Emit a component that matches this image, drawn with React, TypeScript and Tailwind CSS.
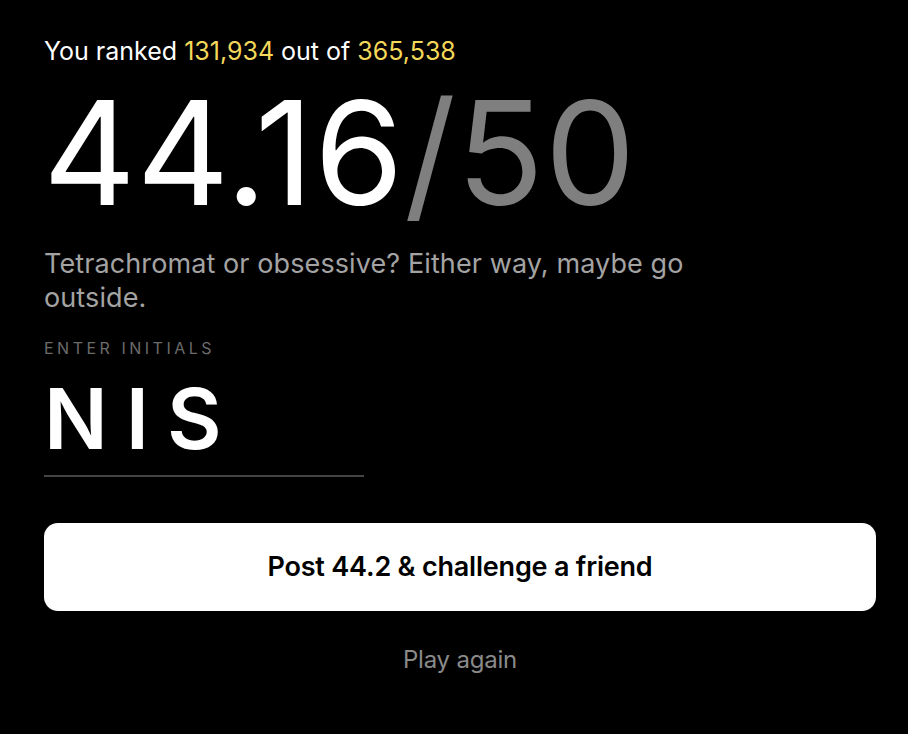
import React, { useState } from 'react'

const FONT = { fontFamily: 'Inter, "Noto Sans", sans-serif' }

export default function App() {
  const [initials, setInitials] = useState('NIS')
  const score = 44.16
  const max = 50

  return (
    <div className="min-h-screen w-full bg-black text-white" style={FONT}>
      <div className="ml-[44px] flex w-[832px] flex-col pt-[35px]">
        {/* rank line */}
        <p className="text-[25px] leading-[32px]">
          You ranked <span className="text-[#f4d85a]">131,934</span> out of{' '}
          <span className="text-[#f4d85a]">365,538</span>
        </p>

        {/* score */}
        <div className="-ml-[1px] mt-[16px] flex items-baseline text-[144px] leading-[140px] tracking-[0.6px]">
          <span className="text-white">{score}</span>
          <span className="text-[#7f7f7f]">/{max}</span>
        </div>

        <p className="mt-[24px] w-[700px] text-[27px] leading-[34px] tracking-[0.1px] text-[#a3a3a3]">
          Tetrachromat or obsessive? Either way, maybe go outside.
        </p>

        {/* initials */}
        <label className="mt-[23px] text-[16px] uppercase leading-[20px] tracking-[3.5px] text-[#6b6b6b]">
          Enter initials
        </label>
        <input
          value={initials}
          maxLength={3}
          onChange={(e) => setInitials(e.target.value.toUpperCase())}
          className="mt-[14px] w-[320px] border-b-2 border-[#444] bg-transparent pb-[9px] text-[84px] font-semibold leading-[94px] tracking-[18px] text-white outline-none"
        />

        <button className="mt-[46px] h-[88px] w-full rounded-[14px] bg-white text-[27px] font-semibold tracking-[-0.2px] text-black">
          Post {score.toFixed(1)} &amp; challenge a friend
        </button>

        <button className="mt-[31px] self-center text-[24px] tracking-[-0.2px] text-[#8a8a8a]">
          Play again
        </button>
      </div>
    </div>
  )
}
